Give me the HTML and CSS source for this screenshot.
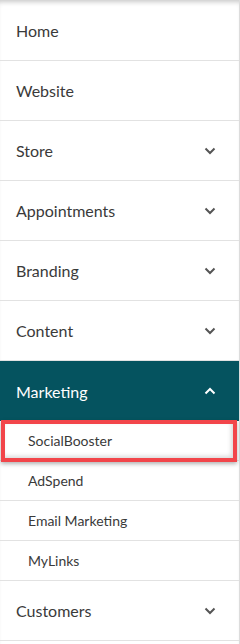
FILE: index.html
```html
<!DOCTYPE html>
<html>
<head>
<meta charset="utf-8">
<link rel="stylesheet" href="styles.css">
</head>
<body>
<nav class="menu">
  <div class="item first">Home</div>
  <div class="item">Website</div>
  <div class="item">Store<svg class="chev" viewBox="0 0 12 8"><path d="M1.5 1.5 L6 6 L10.5 1.5"/></svg></div>
  <div class="item">Appointments<svg class="chev" viewBox="0 0 12 8"><path d="M1.5 1.5 L6 6 L10.5 1.5"/></svg></div>
  <div class="item">Branding<svg class="chev" viewBox="0 0 12 8"><path d="M1.5 1.5 L6 6 L10.5 1.5"/></svg></div>
  <div class="item">Content<svg class="chev" viewBox="0 0 12 8"><path d="M1.5 1.5 L6 6 L10.5 1.5"/></svg></div>
  <div class="item active">Marketing<svg class="chev" viewBox="0 0 12 8"><path d="M1.5 6.5 L6 2 L10.5 6.5"/></svg></div>
  <div class="sub highlighted">SocialBooster<span class="mark"></span></div>
  <div class="sub">AdSpend</div>
  <div class="sub">Email Marketing</div>
  <div class="sub">MyLinks</div>
  <div class="item">Customers<svg class="chev" viewBox="0 0 12 8"><path d="M1.5 1.5 L6 6 L10.5 1.5"/></svg></div>
</nav>
</body>
</html>
```
FILE: styles.css
```css
html, body {
  margin: 0;
  padding: 0;
  background: #fff;
}
.menu {
  width: 239px;
  height: 644px;
  border-right: 1px solid #dcdcdc;
  font-family: Lato, "Open Sans", sans-serif;
  color: #3a3a3a;
  box-shadow: inset 0 5px 5px -3px rgba(0,0,0,0.22);
  display: flex;
  flex-direction: column;
}
.item {
  height: 59px;
  border-bottom: 1px solid #e2e2e2;
  display: flex;
  align-items: center;
  justify-content: space-between;
  padding: 0 23px 0 16px;
  font-size: 16px;
}
.item.first {
  height: 59px;
  margin-top: 1px;
}
.item.active {
  background: #05535f;
  color: #fff;
  height: 60px;
  border-bottom: none;
}
.chev {
  width: 12px;
  height: 8px;
  fill: none;
  stroke: #555;
  stroke-width: 2;
}
.active .chev {
  stroke: #fff;
}
.sub {
  position: relative;
  height: 39px;
  border-bottom: 1px solid #e2e2e2;
  display: flex;
  align-items: center;
  padding-left: 28px;
  font-size: 14px;
}
.mark {
  position: absolute;
  left: 1px;
  right: 2px;
  top: -1px;
  bottom: -2px;
  border: 4px solid #f2454a;
  box-shadow: 0 2px 4px rgba(0,0,0,0.3), inset -2px -2px 4px rgba(0,0,0,0.15);
}
```
